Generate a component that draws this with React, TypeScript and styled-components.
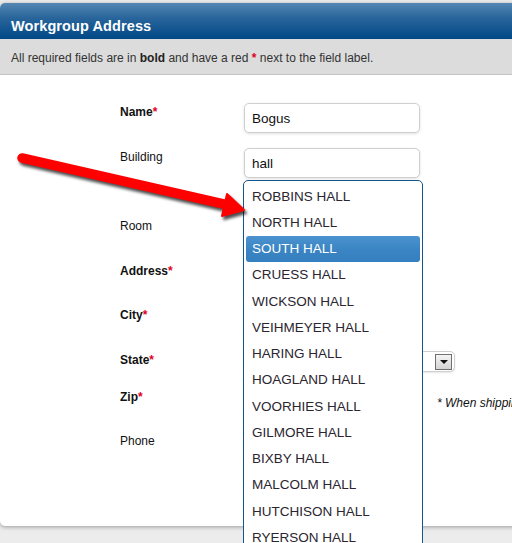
import React from 'react'
import styled, { createGlobalStyle } from 'styled-components'

const GlobalStyle = createGlobalStyle`
  html, body {
    margin: 0;
    padding: 0;
    background: #ececec;
    overflow: hidden;
    font-family: "Liberation Sans", Arial, sans-serif;
  }
`

const Page = styled.div`
  position: relative;
  width: 512px;
  height: 543px;
  padding-top: 3px;
  box-sizing: border-box;
  overflow: hidden;
`

const Panel = styled.div`
  width: 620px;
  background: #fff;
  border-radius: 5px;
  box-shadow: 0 1px 4px rgba(0, 0, 0, 0.35);
  overflow: hidden;
`

const Header = styled.div`
  height: 27px;
  padding: 9px 0 0 11px;
  display: flex;
  align-items: center;
  background: linear-gradient(#5587b3 0%, #2a669c 40%, #004886 100%);
  color: #fff;
  font-weight: bold;
  font-size: 14.5px;
  letter-spacing: 0.1px;
`

const Note = styled.div`
  height: 33px;
  padding: 2px 0 0 11px;
  display: flex;
  align-items: center;
  background: #dcdcdc;
  border-bottom: 1px solid #c2c2c2;
  color: #333;
  font-size: 12px;

  b {
    color: #222;
  }
`

const Star = styled.span`
  color: #e3001b;
  font-weight: bold;
`

const Form = styled.div`
  padding: 28px 0 50px 120px;
`

const Row = styled.div<{ $h: number }>`
  height: ${(p) => p.$h}px;
  display: flex;
  align-items: flex-start;
`

const Label = styled.div<{ $req?: boolean }>`
  width: 124px;
  line-height: 16px;
  padding-top: 1px;
  font-size: 12px;
  font-weight: ${(p) => (p.$req ? 'bold' : 'normal')};
  color: #111;
`

const Input = styled.div`
  width: 176px;
  height: 30px;
  box-sizing: border-box;
  border: 1px solid #cfcfcf;
  border-radius: 5px;
  box-shadow: 0 1px 3px rgba(0, 0, 0, 0.12);
  padding-left: 7px;
  display: flex;
  align-items: center;
  font-size: 13.5px;
  color: #111;
  background: #fff;
`

const SelectBox = styled.div`
  width: 211px;
  height: 21px;
  box-sizing: border-box;
  border: 1px solid #cfcfcf;
  border-radius: 5px;
  box-shadow: 0 1px 2px rgba(0, 0, 0, 0.1);
  display: flex;
  justify-content: flex-end;
  align-items: center;
  padding-right: 2px;
  background: #fff;
`

const SelectButton = styled.div`
  width: 17px;
  height: 16px;
  box-sizing: border-box;
  border: 1px solid #6f6f6f;
  background: linear-gradient(#f4f4f4, #d4d4d4);
  display: flex;
  align-items: center;
  justify-content: center;

  &::after {
    content: '';
    border-left: 4px solid transparent;
    border-right: 4px solid transparent;
    border-top: 4px solid #111;
  }
`

const FieldGroup = styled.div`
  display: flex;
  align-items: center;
  height: 30px;
`

const Hint = styled.div`
  margin-left: 17px;
  font-size: 12px;
  font-style: italic;
  color: #111;
  white-space: nowrap;
`

const Suggestions = styled.ul`
  position: absolute;
  left: 243px;
  top: 180px;
  width: 180px;
  height: 400px;
  margin: 0;
  padding: 2px;
  box-sizing: border-box;
  list-style: none;
  background: #fff;
  border: 1px solid #15548c;
  border-radius: 5px 5px 0 0;
`

const Suggestion = styled.li<{ $active?: boolean }>`
  height: 26.25px;
  display: flex;
  align-items: center;
  padding-left: 6px;
  font-size: 13.5px;
  color: ${(p) => (p.$active ? '#fff' : '#2a2530')};
  border-radius: 3px;
  background: ${(p) =>
    p.$active ? 'linear-gradient(#4b93cf, #3a84c3 55%, #3580c0)' : 'transparent'};
`

const Arrow = styled.svg`
  position: absolute;
  left: 0;
  top: 0;
  filter: drop-shadow(2px 3px 1.5px rgba(0, 0, 0, 0.7));
`

const halls = [
  'ROBBINS HALL',
  'NORTH HALL',
  'SOUTH HALL',
  'CRUESS HALL',
  'WICKSON HALL',
  'VEIHMEYER HALL',
  'HARING HALL',
  'HOAGLAND HALL',
  'VOORHIES HALL',
  'GILMORE HALL',
  'BIXBY HALL',
  'MALCOLM HALL',
  'HUTCHISON HALL',
  'RYERSON HALL',
]

const App = () => {
  return (
    <Page>
      <GlobalStyle />
      <Panel>
        <Header>Workgroup Address</Header>
        <Note>
          All required fields are in&nbsp;<b>bold</b>&nbsp;and have a red&nbsp;<Star>*</Star>&nbsp;next to the field label.
        </Note>
        <Form>
          <Row $h={45}>
            <Label $req>Name<Star>*</Star></Label>
            <Input>Bogus</Input>
          </Row>
          <Row $h={69}>
            <Label>Building</Label>
            <Input>hall</Input>
          </Row>
          <Row $h={45}>
            <Label>Room</Label>
            <Input />
          </Row>
          <Row $h={44}>
            <Label $req>Address<Star>*</Star></Label>
            <Input />
          </Row>
          <Row $h={45}>
            <Label $req>City<Star>*</Star></Label>
            <Input />
          </Row>
          <Row $h={37}>
            <Label $req>State<Star>*</Star></Label>
            <SelectBox>
              <SelectButton />
            </SelectBox>
          </Row>
          <Row $h={44}>
            <Label $req>Zip<Star>*</Star></Label>
            <FieldGroup>
              <Input />
              <Hint>* When shipping to a P.O. Box</Hint>
            </FieldGroup>
          </Row>
          <Row $h={44}>
            <Label>Phone</Label>
            <Input />
          </Row>
        </Form>
      </Panel>

      <Suggestions>
        {halls.map((h) => (
          <Suggestion key={h} $active={h === 'SOUTH HALL'}>
            {h}
          </Suggestion>
        ))}
      </Suggestions>

      <Arrow width="260" height="240" viewBox="0 0 260 240">
        <line x1="22" y1="158" x2="228" y2="205" stroke="#ff0000" strokeWidth="9.5" strokeLinecap="round" />
        <polygon points="244,210 227,194 222,216" fill="#ff0000" stroke="#ff0000" strokeWidth="2" strokeLinejoin="round" />
      </Arrow>
    </Page>
  )
}

export default App
